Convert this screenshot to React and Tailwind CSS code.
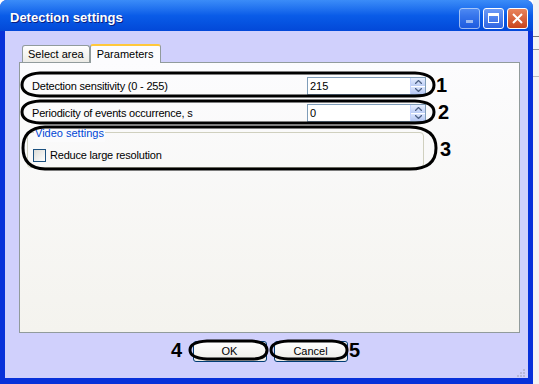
import React from 'react'

const FONT = { fontFamily: 'Tahoma, "Liberation Sans", Arial, sans-serif' }

function Spin() {
  return (
    <div className="w-[15px] h-full flex flex-col border-l border-[#c3d3fd] bg-[#c6d3f7]">
      <div className="flex-1 flex items-center justify-center bg-gradient-to-b from-[#e6eeff] to-[#bccdf5] border-b border-white">
        <svg width="7" height="4" viewBox="0 0 7 4"><path d="M0 4 L3.5 0.5 L7 4" fill="none" stroke="#4d6185" strokeWidth="1.3" /></svg>
      </div>
      <div className="flex-1 flex items-center justify-center bg-gradient-to-b from-[#d9e4fd] to-[#b4c6f2]">
        <svg width="7" height="4" viewBox="0 0 7 4"><path d="M0 0 L3.5 3.5 L7 0" fill="none" stroke="#4d6185" strokeWidth="1.3" /></svg>
      </div>
    </div>
  )
}

function Field({ label, value }) {
  return (
    <div className="flex items-center h-[18px]">
      <span className="w-[287px] pl-[12px] text-[11px] tracking-[-0.2px] text-black">{label}</span>
      <div className="w-[119px] h-[18px] flex border border-[#7f9db9] bg-white">
        <span className="flex-1 pl-[2px] text-[11px] leading-[16px] text-black">{value}</span>
        <Spin />
      </div>
    </div>
  )
}

function XpButton({ children }) {
  return (
    <div className="w-[74px] h-[21px] rounded-[3px] border border-[#003c74] bg-gradient-to-b from-white to-[#ecebe6] flex items-center justify-center text-[11px] text-black">
      {children}
    </div>
  )
}

function Annotations() {
  return (
    <svg className="absolute inset-0 pointer-events-none" width="539" height="384" viewBox="0 0 539 384">
      <g fill="none" stroke="#000" strokeWidth="3">
        <path d="M40 73 L415 73 Q434 74 434 85 Q434 96 415 96 L40 96 Q22 95 22 85 Q22 74 40 73 Z" />
        <path d="M40 101 L415 101 Q434 102 434 112 Q434 123 415 123 L40 123 Q22 122 22 112 Q22 102 40 101 Z" />
        <path d="M45 127 L410 127 Q436 128 436 148 Q436 169 410 169 L45 169 Q23 168 23 148 Q23 128 45 127 Z" />
        <path d="M207 341 L252 341 Q267 342 267 350 Q267 359 252 359 L207 359 Q190 358 190 350 Q190 342 207 341 Z" />
        <path d="M288 341 L332 341 Q347 342 347 350 Q347 359 332 359 L288 359 Q271 358 271 350 Q271 342 288 341 Z" />
      </g>
      <g fill="#000" fontFamily='"Liberation Sans", Arial, sans-serif' fontWeight="700" fontSize="20">
        <text x="436" y="92">1</text>
        <text x="438" y="119">2</text>
        <text x="440" y="156">3</text>
        <text x="171" y="357">4</text>
        <text x="349" y="357">5</text>
      </g>
    </svg>
  )
}

export default function App() {
  return (
    <div className="relative w-[539px] h-[384px] flex bg-white overflow-hidden" style={FONT}>
      <div className="w-[533px] h-full flex flex-col rounded-t-[7px] bg-[#0831d9] overflow-hidden">
        {/* title bar */}
        <div className="h-[31px] shrink-0 flex items-center pl-[10px] pr-[5px] pt-[5px] bg-gradient-to-b from-[#3b8cf8] via-[#0a5ce8] to-[#0348d8]">
          <span className="flex-1 text-white font-bold text-[13px]" style={{ fontFamily: '"Liberation Sans", Arial, sans-serif', textShadow: '1px 1px #0a1e80' }}>
            Detection settings
          </span>
          <div className="flex gap-[3px]">
            <div className="w-[21px] h-[21px] rounded-[3px] border border-white bg-gradient-to-b from-[#6d9af6] to-[#2f64e2] opacity-60 flex items-end justify-center pb-[5px]">
              <div className="w-[7px] h-[3px] bg-white" />
            </div>
            <div className="w-[21px] h-[21px] rounded-[3px] border border-white bg-gradient-to-b from-[#6d9af6] to-[#2f64e2] flex items-center justify-center">
              <div className="w-[11px] h-[10px] border border-white border-t-[3px]" />
            </div>
            <div className="w-[21px] h-[21px] rounded-[3px] border border-white bg-gradient-to-b from-[#e9845c] to-[#c8431c] flex items-center justify-center">
              <svg width="11" height="11" viewBox="0 0 11 11"><path d="M1 1 L10 10 M10 1 L1 10" stroke="#fff" strokeWidth="2" /></svg>
            </div>
          </div>
        </div>
        {/* client */}
        <div className="flex-1 flex flex-col mx-[5px] mb-[6px] bg-[#d0d0fc]">
          <div className="flex-1 flex flex-col pl-[14px] pr-[9px] pt-[13px]">
            {/* tabs */}
            <div className="flex items-end h-[18px] pl-[3px] text-[11px]">
              <div className="h-[17px] px-[5px] flex items-center border border-b-0 border-[#919b9c] rounded-t-[3px] bg-gradient-to-b from-white to-[#ecebe6] text-black">
                Select area
              </div>
              <div className="h-[19px] px-[6px] flex items-center border-x border-[#919b9c] border-t-[2px] border-t-[#ffc83c] rounded-t-[3px] bg-[#fcfcfe] text-black -mb-px relative z-10">
                Parameters
              </div>
            </div>
            <div className="w-[501px] h-[271px] border border-[#919b9c] bg-gradient-to-b from-[#fcfcfe] to-[#f4f3ee] flex flex-col pt-[14px] gap-[9px]">
              <Field label="Detection sensitivity (0 - 255)" value="215" />
              <Field label="Periodicity of events occurrence, s" value="0" />
              <div className="ml-[7px] mt-[1px] w-[397px] h-[36px] border border-[#d0d0bf] rounded-[4px] relative">
                <span className="absolute -top-[8px] left-[6px] px-[1px] bg-[#fbfbfc] text-[11px] text-[#0046d5]">Video settings</span>
                <div className="flex items-center gap-[4px] pl-[5px] pt-[14px]">
                  <div className="w-[13px] h-[13px] border border-[#1c5180] bg-gradient-to-br from-[#dcdcd7] to-white" />
                  <span className="text-[11px] tracking-[-0.2px] text-black">Reduce large resolution</span>
                </div>
              </div>
            </div>
            {/* buttons */}
            <div className="flex justify-center gap-[7px] pt-[8px] pl-[2px]">
              <XpButton>OK</XpButton>
              <XpButton>Cancel</XpButton>
            </div>
          </div>
          <div className="h-[10px] flex justify-end pr-[2px]">
            <svg width="10" height="10" viewBox="0 0 10 10" fill="#b8b8d8">
              <rect x="7" y="1" width="2" height="2" /><rect x="4" y="4" width="2" height="2" /><rect x="7" y="4" width="2" height="2" />
              <rect x="1" y="7" width="2" height="2" /><rect x="4" y="7" width="2" height="2" /><rect x="7" y="7" width="2" height="2" />
            </svg>
          </div>
        </div>
      </div>
      <div className="flex-1 flex flex-col bg-[#f4f4f4]">
        <div className="h-[36px]" />
        <div className="h-px bg-[#777]" />
        <div className="h-[12px]" />
        <div className="h-px bg-[#999]" />
        <div className="h-[26px]" />
        <div className="h-px bg-[#bbb]" />
      </div>
      <Annotations />
    </div>
  )
}
